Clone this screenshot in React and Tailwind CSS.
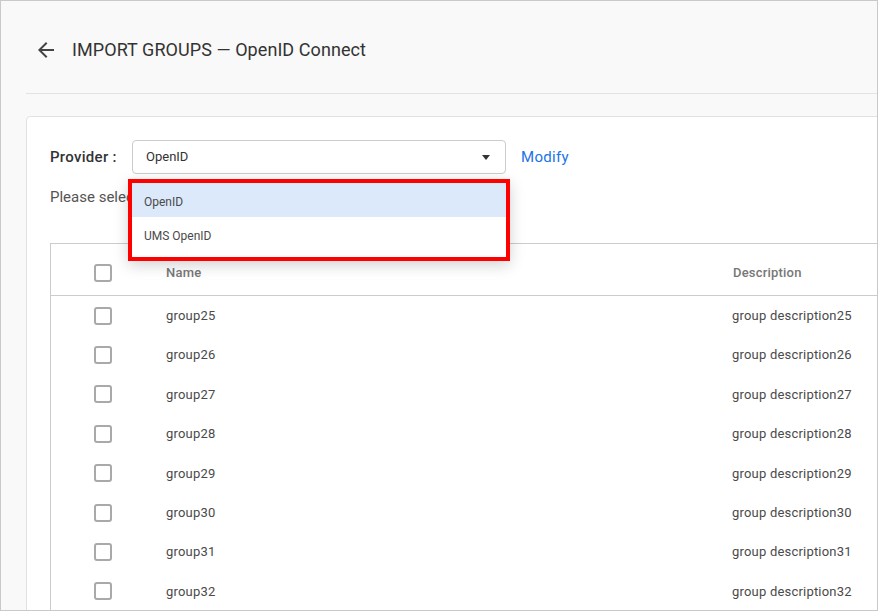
import React from "react";

const rows = [25, 26, 27, 28, 29, 30, 31, 32];

function Checkbox() {
  return <div className="w-[18px] h-[18px] border-2 border-[#a9a9a9] rounded-[3px] bg-white" />;
}

export default function App() {
  return (
    <div
      className="w-[878px] h-[611px] overflow-hidden bg-[#f9f9f9] border border-[#c9c9c9]"
      style={{ fontFamily: "Roboto, 'Liberation Sans', sans-serif" }}
    >
      <div className="h-[92px] pt-[6px] flex items-center pl-[33px]">
        <svg width="24" height="24" viewBox="0 0 24 24" className="text-[#444]">
          <path
            fill="currentColor"
            d="M20 11H7.83l5.59-5.59L12 4l-8 8 8 8 1.41-1.41L7.83 13H20v-2z"
          />
        </svg>
        <div className="ml-[14px] text-[18px] text-[#333] leading-none tracking-[0.07px]">
          IMPORT GROUPS — OpenID Connect
        </div>
      </div>
      <div className="ml-[25px] border-t border-[#e3e3e3]" />
      <div className="mt-[22px] ml-[25px] w-[900px] bg-white border border-[#e2e2e2] rounded-[4px] pl-[23px] pt-[23px] h-[600px]">
        <div className="flex items-center">
          <div className="w-[82px] text-[15px] font-medium text-[#333] tracking-[0.3px]">Provider :</div>
          <div className="relative">
            <div className="w-[374px] h-[34px] border border-[#cccccc] rounded-[4px] flex items-center justify-between pl-[13px] pr-[15px] text-[13px] text-[#333]">
              <span>OpenID</span>
              <span className="w-0 h-0 border-l-[4.5px] border-r-[4.5px] border-t-[5px] border-l-transparent border-r-transparent border-t-[#333]" />
            </div>
            <div className="absolute left-[-4px] top-[39px] w-[382px] border-4 border-[#ff0000] z-10 shadow-[0_4px_14px_rgba(0,0,0,0.18)]">
              <div className="bg-white pb-[6px] text-[12px] text-[#4a4a4a]">
                <div className="h-[34px] flex items-center pt-[3px] pl-[12px] bg-[#dce9fb]">OpenID</div>
                <div className="h-[34px] flex items-center pt-[3px] pl-[12px]">UMS OpenID</div>
              </div>
            </div>
          </div>
          <div className="ml-[15px] text-[15px] text-[#1a73e8] tracking-[0.3px]">Modify</div>
        </div>
        <div className="mt-[13px] text-[15px] leading-[20px] text-[#555]">
          Please select groups to import
        </div>
        <div className="mt-[36px] border-l border-t border-[#cccccc]">
          <div className="flex items-center h-[52px] pt-[6px] border-b border-[#cccccc] text-[13px] font-medium text-[#777] tracking-[0.2px]">
            <div className="w-[115px] pl-[43px]">
              <Checkbox />
            </div>
            <div className="w-[566px]">Name</div>
            <div className="pl-[1px]">Description</div>
          </div>
          {rows.map((n) => (
            <div key={n} className="flex items-center h-[39.4px] text-[13px] text-[#4a4a4a] tracking-[0.2px]">
              <div className="w-[115px] pl-[43px]">
                <Checkbox />
              </div>
              <div className="w-[566px]">group{n}</div>
              <div>group description{n}</div>
            </div>
          ))}
        </div>
      </div>
    </div>
  );
}
